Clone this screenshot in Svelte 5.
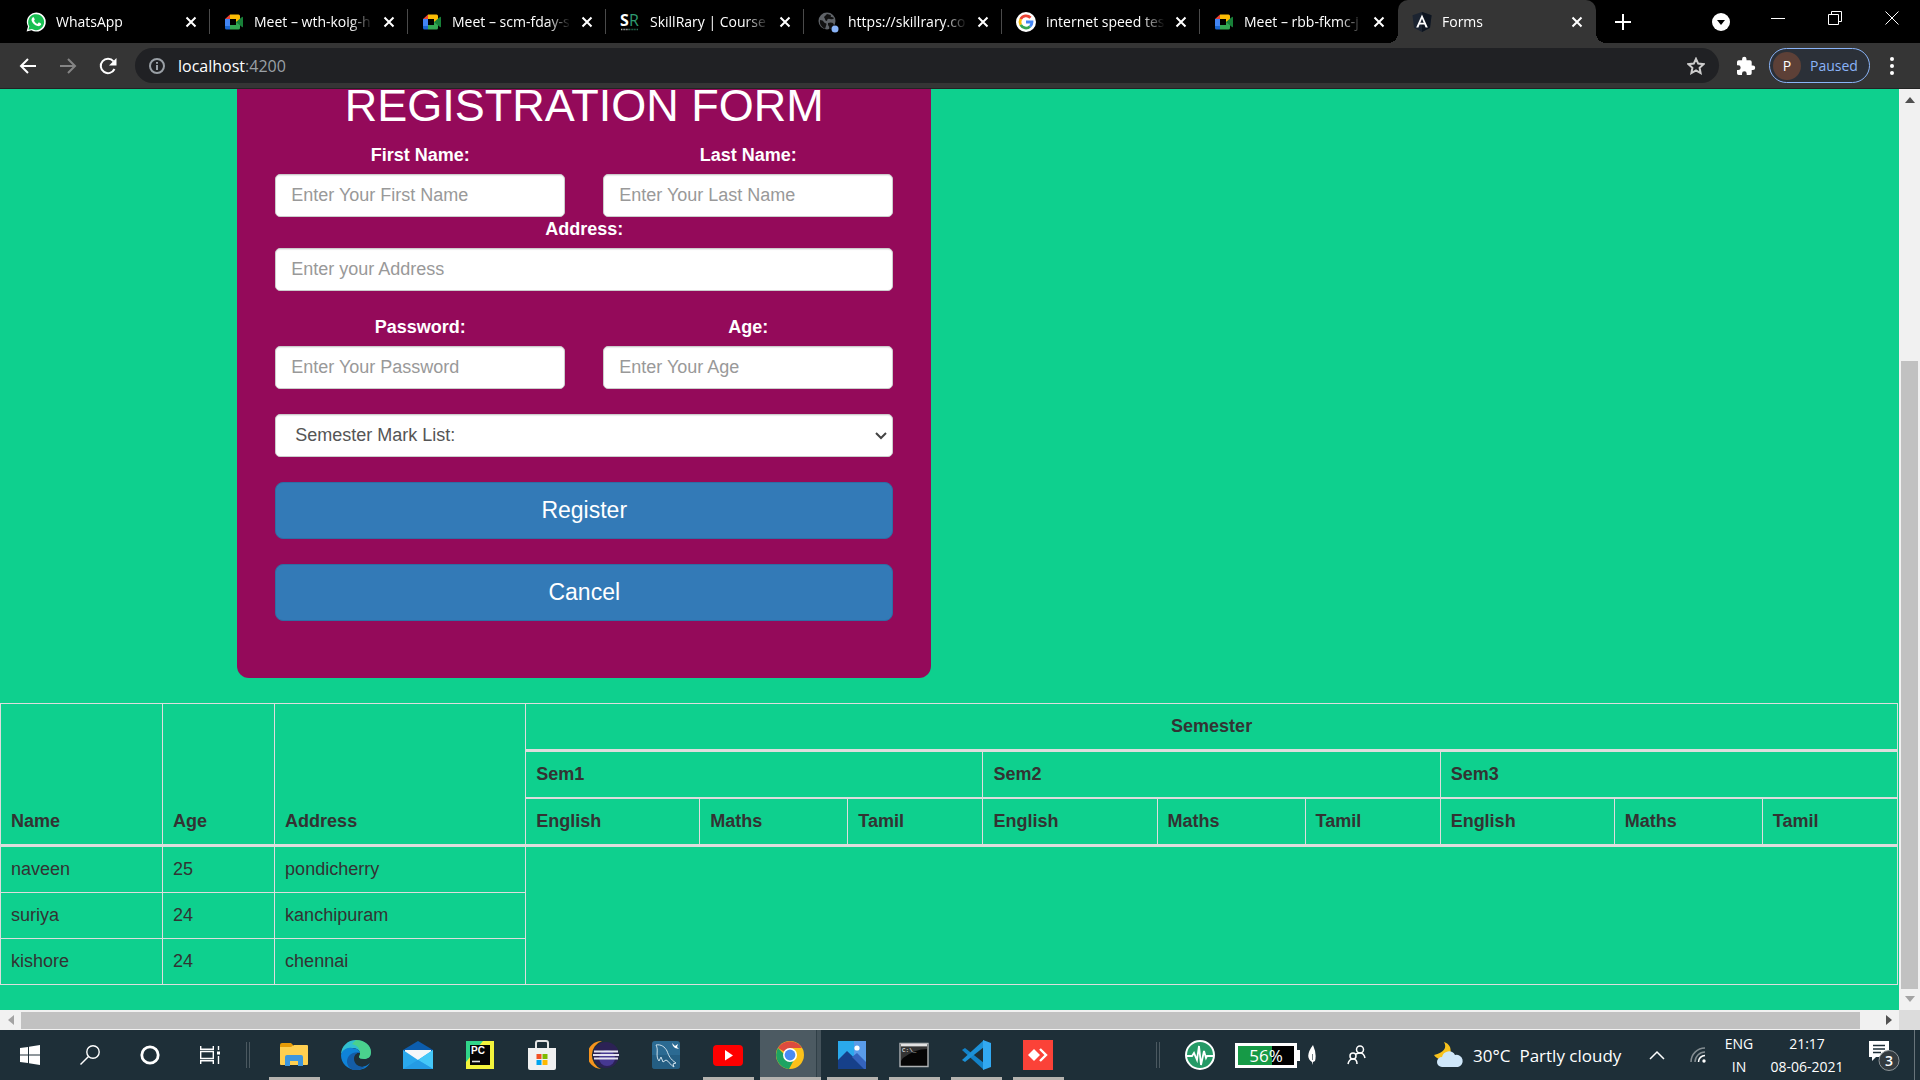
<script>
  const tabs = [
    { icon: 'whatsapp', title: 'WhatsApp' },
    { icon: 'meet', title: 'Meet – wth-koig-h' },
    { icon: 'meet', title: 'Meet – scm-fday-s' },
    { icon: 'skillrary', title: 'SkillRary | Course' },
    { icon: 'globe', title: 'https://skillrary.co' },
    { icon: 'google', title: 'internet speed tes' },
    { icon: 'meet', title: 'Meet – rbb-fkmc-j' },
    { icon: 'angular', title: 'Forms', active: true }
  ];

  const apps = [
    { name: 'File Explorer', icon: 'explorer', open: true },
    { name: 'Edge', icon: 'edge' },
    { name: 'Mail', icon: 'mail' },
    { name: 'PyCharm', icon: 'pycharm' },
    { name: 'Store', icon: 'store' },
    { name: 'Eclipse', icon: 'eclipse' },
    { name: 'MySQL Workbench', icon: 'mysql' },
    { name: 'YouTube', icon: 'youtube', open: true },
    { name: 'Chrome', icon: 'chrome', open: true, current: true },
    { name: 'Photos', icon: 'photos', open: true },
    { name: 'Command Prompt', icon: 'cmd', open: true },
    { name: 'Visual Studio Code', icon: 'vscode', open: true },
    { name: 'AnyDesk', icon: 'anydesk', open: true }
  ];

  const semesters = ['Sem1', 'Sem2', 'Sem3'];
  const subjects = ['English', 'Maths', 'Tamil'];
  const people = [
    { name: 'naveen', age: 25, address: 'pondicherry' },
    { name: 'suriya', age: 24, address: 'kanchipuram' },
    { name: 'kishore', age: 24, address: 'chennai' }
  ];
</script>

{#snippet favicon(kind)}
  <svg class="favicon" viewBox="0 0 20 20" aria-hidden="true">
    {#if kind === 'whatsapp'}
      <path d="M0.6 19.5 2 14.6A9.5 9.5 0 1 1 5.5 18.2Z" fill="#fff" />
      <path d="M2.4 17.8 3.3 14.3A8 8 0 1 1 6 17Z" fill="#17c052" />
      <path d="M6.6 5.6c.5-.5 1.200-.4 1.400.1l.7 1.600c.1.400-.1.700-.7 1.400.8 1.600 1.900 2.500 3.500 3.200l.9-1.100c.2-.3.5-.3.8-.2l1.700.9c.4.2.3 1.100 0 1.600-.7 1-2 1.300-3.200 1-3.200-.9-5.200-3-6-5.200-.4-1.200 0-2.500.9-3.300z" fill="#fff" />
    {:else if kind === 'meet'}
      <path d="M1 7 6 2.500V7z" fill="#ea4335" />
      <path d="M6 2.500h8.500q1.500 0 1.500 1.500v5l-4 2V7H6z" fill="#fbbc04" />
      <path d="M1 7h5v7H1z" fill="#4285f4" />
      <path d="M1 14h5v3.500H2.500Q1 17.500 1 16z" fill="#1967d2" />
      <path d="M6 13h6v-3l4-1v7q0 1.500-1.500 1.500H6z" fill="#34a853" />
      <path d="m12 10 6-5q1-.6 1 .5v9q0 1-1 .4z" fill="#188038" />
    {:else if kind === 'skillrary'}
      <text x="0" y="14" font-size="16" font-weight="700" fill="#fff" font-family="Open Sans, sans-serif">S</text>
      <text x="9" y="14" font-size="16" fill="#2e9b70" font-family="Open Sans, sans-serif">R</text>
      <path d="M1 17.500h8" stroke="#aaa" stroke-width="1.500" stroke-dasharray="1 .6" />
      <path d="M9 17.500h9" stroke="#286b51" stroke-width="1.500" stroke-dasharray="1 .6" />
    {:else if kind === 'globe'}
      <circle cx="9" cy="9" r="8.500" fill="#5f6368" />
      <path d="M2 8q3 0 4 2t2 1q1 1 0 3l-1 3q-6-3-5-9zM9 2l4 1q-1 2 1 2l2 1q-1 2-4 1t-3 2q-2 0-2-2l-1-2zM10 11q3-1 5 0l1 2q-2 4-5 4 1-2-1-4z" fill="#111" />
      <circle cx="17" cy="17" r="3.500" fill="#8ab4f8" />
    {:else if kind === 'google'}
      <circle cx="10" cy="10" r="10" fill="#fff" />
      <g fill="none" stroke-width="2.800">
        <path d="M14.500 5.800A6 6 0 0 0 4.700 7.200" stroke="#ea4335" />
        <path d="M4.700 7.200a6 6 0 0 0 0 5.600" stroke="#fbbc05" />
        <path d="M4.700 12.800a6 6 0 0 0 9.300 1.700" stroke="#34a853" />
        <path d="M14 14.500A6 6 0 0 0 16 10h-6" stroke="#4285f4" />
      </g>
    {:else}
      <path d="m10 0 9.500 3.200-1.500 12.500L10 20l-8-4.300L.5 3.200z" fill="#1c2431" />
      <path d="m10 0 9.500 3.200-1.500 12.500L10 20z" fill="#0e1520" />
      <path d="m10 2.500 5.800 13h-2.200l-1.200-2.900H7.600l-1.200 2.900H4.200zm0 4.200-1.700 4.100h3.400z" fill="#fff" />
    {/if}
  </svg>
{/snippet}

{#snippet appIcon(kind)}
  <svg class="app-icon" viewBox="0 0 30 30" aria-hidden="true">
    {#if kind === 'explorer'}
      <path d="M1 5q0-2 2-2h9l2 2v5H1z" fill="#e69b07" />
      <path d="M1 7h11l3-2h13q1 0 1 1v18q0 1-1 1H2q-1 0-1-1z" fill="#ffcf50" />
      <path d="M6 26V17q0-2 2-2h14q2 0 2 2v9h-5v-5h-8v5z" fill="#3d96dd" />
    {:else if kind === 'edge'}
      <path d="M0 15C0 6 7 0 15 0c9 0 15 6 15 12 0 5-3 7-7 7-3 0-5-1-5-2s1-1 1-4c0-3-4-5-8-5C6 8 1 11 0 15z" fill="#31bfd0" />
      <path d="M15 0c9 0 15 6 15 12 0 5-3 7-7 7-3 0-5-1-5-2s1-1 1-4q0-7-8-9 4-4 4-4z" fill="#5bdd60" opacity=".6" />
      <path d="M0 15c1-5 6-8 11-7 5 0 8 3 8 5-3-1-7 2-7 6 0 5 5 8 9 8 4-1 6-2 8-4-3 5-8 7-13 7C6 30 0 23 0 15z" fill="#0f83d8" />
      <path d="M12 30c-8-3-8-14 0-17 3-1 6-1 7 0-3-1-6 2-6 6 0 5 5 8 9 8l3-1c-3 3-8 5-13 4z" fill="#145da8" />
    {:else if kind === 'mail'}
      <path d="M0 10 15 1l15 9v3H0z" fill="#0c5dad" />
      <path d="M2 10h26v12H2z" fill="#f5f7f9" />
      <path d="m0 10 15 10 15-10v19H0z" fill="#2aa8ec" />
      <path d="m15 20 15-10v19z" fill="#45c8f8" />
      <path d="m15 20-15 9h30z" fill="#249be4" />
    {:else if kind === 'pycharm'}
      <path d="M1 1h28v28H1z" fill="#f4f43c" />
      <path d="M1 1h17L1 22z" fill="#31d58a" />
      <path d="M5 5h20v20H5z" fill="#050505" />
      <text x="6" y="14" font-size="10" font-weight="700" fill="#fff" font-family="Liberation Sans, sans-serif">PC</text>
      <path d="M7 21.500h8" stroke="#ddd" stroke-width="1.600" />
    {:else if kind === 'store'}
      <path d="M9 9V3q0-2 2-2h8q2 0 2 2v6" fill="none" stroke="#e5e5e5" stroke-width="2" />
      <path d="M1 8h28v20q0 2-2 2H3q-2 0-2-2z" fill="#f1f1f1" />
      <path d="M9.500 14h5v5h-5z" fill="#f25022" /><path d="M15.500 14h5v5h-5z" fill="#7fba00" />
      <path d="M9.500 20h5v5h-5z" fill="#00a4ef" /><path d="M15.500 20h5v5h-5z" fill="#ffb900" />
    {:else if kind === 'eclipse'}
      <path d="M13 1A14 14 0 0 0 12 29 15 15 0 0 1 13 1z" fill="#f7941e" />
      <circle cx="17" cy="15" r="13" fill="#2c2255" />
      <circle cx="18" cy="18" r="8" fill="#463891" />
      <path d="M5 11.500h24M4 15h26M5 18.500h24" stroke="#e4e2f0" stroke-width="1.800" />
    {:else if kind === 'mysql'}
      <rect x="1" y="1" width="28" height="28" rx="3" fill="#2b6a92" />
      <path d="M1 15h28v11q0 3-3 3H4q-3 0-3-3z" fill="#1f5679" opacity=".6" />
      <path d="M5 5c5-1 9 2 11 6 2 5 3 8 9 12l-3 1 1 3c-4-2-5-6-8-7l-3 2-2-5-2 4C4 16 8 10 5 5z" fill="none" stroke="#cfe1ec" stroke-width="1" />
      <path d="m21 3 3 3 3-2-1 3 2 2-4-1-2-2z" fill="#fff" />
    {:else if kind === 'youtube'}
      <rect y="5" width="30" height="21" rx="4" fill="#f00" />
      <path d="m12 10 8 5.500-8 5z" fill="#fff" />
    {:else if kind === 'chrome'}
      <circle cx="15" cy="15" r="14" fill="#fbc11a" />
      <path d="M15 15 3 8A14 14 0 0 1 27 8H15z" fill="#dd4b3e" />
      <path d="M3 8a14 14 0 0 0 11 21l6-11-5 2z" fill="#1ea362" />
      <circle cx="15" cy="15" r="7" fill="#fff" />
      <circle cx="15" cy="15" r="5.400" fill="#4a8af4" />
    {:else if kind === 'photos'}
      <path d="M1 1h28v28H1z" fill="#2aa9ec" />
      <path d="M17 1h12v28H17z" fill="#7b95e8" opacity=".6" />
      <path d="m1 20 9-9 19 18H1z" fill="#16408a" />
      <path d="m15 17 5-4 9 9v7h-2z" fill="#3463bc" />
      <circle cx="20" cy="8" r="2.600" fill="#fff" />
    {:else if kind === 'cmd'}
      <path d="M1 3.500h28v23H1z" fill="#050505" stroke="#aeb2b4" stroke-width="1.400" />
      <path d="M2 4h26v2.500H2z" fill="#e2e2e2" />
      <path d="M2 7h26v2Q16 9 4 18l-2 3z" fill="#333" />
      <text x="3" y="12" font-size="6" fill="#fff" font-family="Liberation Mono, monospace">C:\_</text>
    {:else if kind === 'vscode'}
      <path d="m1 10 3-2 19 15v7z" fill="#1382c8" />
      <path d="m1 20 3 2L23 7V0z" fill="#1c91d8" />
      <path d="m22 0 8 3v24l-8 3z" fill="#32a9f2" />
    {:else}
      <path d="M0 0h30v30H0z" fill="#fb4238" />
      <path d="m11 9 6 6-6 6-6-6z" fill="#fff" />
      <path d="m17 9 6 6-6 6" stroke="#fff" stroke-width="2.400" fill="none" />
    {/if}
  </svg>
{/snippet}

<div class="desktop">
  <header class="browser">
    <div class="tabstrip">
      {#each tabs as tab}
        <div class="tab" class:active={tab.active}>
          {@render favicon(tab.icon)}
          <span class="tab-title">{tab.title}</span>
          <button class="tab-close" aria-label="Close tab">
            <svg viewBox="0 0 12 12"><path d="m1.500 1.500 9 9m0-9-9 9" /></svg>
          </button>
        </div>
      {/each}
      <button class="new-tab" aria-label="New tab"><svg viewBox="0 0 16 16"><path d="M8 0v16M0 8h16" /></svg></button>
      <div class="window-controls">
        <button aria-label="Search tabs" class="tab-search">
          <svg viewBox="0 0 18 18"><circle cx="9" cy="9" r="9" fill="#fff" /><path d="M5 7h8l-4 5z" fill="#000" /></svg>
        </button>
        <button aria-label="Minimize"><svg viewBox="0 0 14 14"><path d="M0 7.500h14" /></svg></button>
        <button aria-label="Restore"><svg viewBox="0 0 14 14"><path d="M.5 3.500h10v10H.5zM3.500 3V.500h10v10H11" /></svg></button>
        <button aria-label="Close"><svg viewBox="0 0 14 14"><path d="m.5.500 13 13m0-13-13 13" /></svg></button>
      </div>
    </div>
    <div class="toolbar">
      <button class="nav" aria-label="Back"><svg viewBox="0 0 18 18"><path d="M17 9H2m7-7L2 9l7 7" stroke="#fff" /></svg></button>
      <button class="nav" aria-label="Forward"><svg viewBox="0 0 18 18"><path d="M1 9h15M9 2l7 7-7 7" stroke="#858585" /></svg></button>
      <button class="nav" aria-label="Reload"><svg viewBox="0 0 18 18"><path d="M15.500 12A7.200 7.200 0 1 1 14.500 4.300" stroke="#fff" /><path d="M17.500 1v7.500H10z" fill="#fff" /></svg></button>
      <div class="omnibox">
        <svg class="info" viewBox="0 0 16 16"><circle cx="8" cy="8" r="7" /><path d="M8 7v5M8 4v1.800" /></svg>
        <span class="url">localhost<span class="port">:4200</span></span>
        <button class="star" aria-label="Bookmark this tab"><svg viewBox="0 0 18 18"><path d="m9 1.800 2.200 4.800 5.300.6-3.900 3.600 1 5.200L9 13.400 4.400 16l1-5.200L1.500 7.200l5.300-.6z" /></svg></button>
      </div>
      <button class="ext" aria-label="Extensions">
        <svg viewBox="0 0 20 20"><path d="M17 9.500h-1.300V6q0-1.700-1.700-1.700h-3.500V3a2.200 2.200 0 0 0-4.400 0v1.300H2.700Q1 4.300 1 6v3.300h1.300a2.300 2.300 0 0 1 0 4.700H1v3.300Q1 19 2.700 19H6v-1.300a2.300 2.300 0 0 1 4.700 0V19H14q1.700 0 1.700-1.700v-3.400H17a2.200 2.200 0 0 0 0-4.400z" fill="#fff" /></svg>
      </button>
      <button class="profile"><span class="avatar">P</span>Paused</button>
      <button class="menu" aria-label="Menu"><svg viewBox="0 0 4 18"><circle cx="2" cy="2" r="2" /><circle cx="2" cy="9" r="2" /><circle cx="2" cy="16" r="2" /></svg></button>
    </div>
  </header>

  <div class="viewport">
    <main>
      <form class="card" onsubmit={(e) => e.preventDefault()}>
        <h1>REGISTRATION FORM</h1>
        <div class="pair">
          <div class="field"><label for="first">First Name:</label><input id="first" type="text" placeholder="Enter Your First Name" /></div>
          <div class="field"><label for="last">Last Name:</label><input id="last" type="text" placeholder="Enter Your Last Name" /></div>
        </div>
        <div class="field wide"><label for="address">Address:</label><input id="address" type="text" placeholder="Enter your Address" /></div>
        <div class="pair spaced">
          <div class="field"><label for="password">Password:</label><input id="password" type="password" placeholder="Enter Your Password" /></div>
          <div class="field"><label for="age">Age:</label><input id="age" type="text" placeholder="Enter Your Age" /></div>
        </div>
        <div class="select spaced">
          <select aria-label="Semester Mark List"><option>Semester Mark List:</option></select>
          <svg viewBox="0 0 12 8" aria-hidden="true"><path d="m1 1 5 5 5-5" /></svg>
        </div>
        <button class="submit spaced" type="submit">Register</button>
        <button class="submit" type="button">Cancel</button>
      </form>

      <table>
        <colgroup>
          <col class="c-name" /><col class="c-age" /><col class="c-address" />
          {#each semesters as _}<col class="c-english" /><col class="c-maths" /><col class="c-tamil" />{/each}
        </colgroup>
        <thead>
          <tr>
            <th rowspan="3">Name</th><th rowspan="3">Age</th><th rowspan="3">Address</th>
            <th colspan="9" class="center">Semester</th>
          </tr>
          <tr class="sems">{#each semesters as sem}<th colspan="3">{sem}</th>{/each}</tr>
          <tr>{#each semesters as _}{#each subjects as subject}<th>{subject}</th>{/each}{/each}</tr>
        </thead>
        <tbody>
          {#each people as p}
            <tr><td>{p.name}</td><td>{p.age}</td><td>{p.address}</td></tr>
          {/each}
        </tbody>
      </table>
    </main>
    <div class="vscroll">
      <svg viewBox="0 0 10 6"><path d="M0 6 5 0l5 6z" fill="#505050" /></svg>
      <div class="vtrack"><div class="vthumb"></div></div>
      <svg viewBox="0 0 10 6"><path d="m0 0 5 6 5-6z" fill="#a3a3a3" /></svg>
    </div>
  </div>
  <div class="hscroll">
    <svg viewBox="0 0 6 10"><path d="M6 0 0 5l6 5z" fill="#a3a3a3" /></svg>
    <div class="hthumb"></div>
    <svg class="right" viewBox="0 0 6 10"><path d="m0 0 6 5-6 5z" fill="#505050" /></svg>
    <div class="corner"></div>
  </div>

  <footer class="taskbar">
    <button class="sys" aria-label="Start"><svg viewBox="0 0 20 20"><path d="m0 3 8-1v7.500H0zM9 1.800 20 0v9.500H9zM0 10.500h8V18l-8-1zM9 10.500h11V20L9 18.300z" fill="#fff" /></svg></button>
    <button class="sys" aria-label="Search"><svg viewBox="0 0 20 20"><circle cx="13" cy="7" r="6.200" /><path d="M8.500 11.500 0.500 19.500" /></svg></button>
    <button class="sys" aria-label="Cortana"><svg viewBox="0 0 20 20"><circle cx="10" cy="10" r="8.200" stroke-width="2.800" /></svg></button>
    <button class="sys" aria-label="Task View"><svg viewBox="0 0 20 20"><path d="M.7 1v3.300h12.600V1M.7 19v-3.300h12.600V19M.7 6.500h12.600v7H.7zM18.500 1v4M18.500 11v8" /><path d="M17 6.500h3v3h-3z" fill="#fff" stroke="none" /></svg></button>
    <span class="divider left"></span>
    {#each apps as app}
      <button class="app" class:open={app.open} class:current={app.current} aria-label={app.name}>{@render appIcon(app.icon)}</button>
    {/each}

    <div class="tray">
      <span class="divider"></span>
      <span class="wave"><svg viewBox="0 0 30 30"><circle cx="15" cy="15" r="14" fill="#249a66" stroke="#fff" stroke-width="2" /><path d="M2 16h5l2-3 3 7 2-14 2 19 3-14 2 7 1-2h6" fill="none" stroke="#fff" stroke-width="1.800" /></svg></span>
      <span class="battery">56%</span>
      <span class="leaf"><svg viewBox="0 0 8 20"><path d="M5 0q4 9 2 16l-2 1v3l-1-3Q-4 12 5 0z" fill="#fff" /><path d="M4.500 9v6" stroke="#1e2f38" stroke-width=".6" /></svg></span>
      <span class="contacts"><svg viewBox="0 0 20 20"><circle cx="13" cy="4.500" r="3.500" /><circle cx="6" cy="11" r="3" /><path d="M1 19q1-5 5-5t4 5M9 9q2-1 4-1 4 0 5 5" /></svg></span>
      <span class="weather">
        <svg viewBox="0 0 30 26"><path d="M10 0q5 9-10 13 3 5 9 4 10-3 7-12-2-4-6-5z" fill="#f8c21c" /><path d="M8 25a5 5 0 0 1 0-10 7 7 0 0 1 13-2 6 6 0 0 1 3 12z" fill="#cfe7fa" /></svg>
        <span>30°C</span><span>Partly cloudy</span>
      </span>
      <button class="chevron" aria-label="Show hidden icons"><svg viewBox="0 0 16 10"><path d="m1 9 7-7 7 7" /></svg></button>
      <span class="wifi"><svg viewBox="0 0 16 16"><path d="M1 15A14 14 0 0 1 15 1M5 15A10 10 0 0 1 15 5" opacity=".45" /><path d="M8.500 15A6.500 6.500 0 0 1 15 8.500" /><circle cx="14" cy="14" r="1.700" fill="#fff" stroke="none" /></svg></span>
      <span class="lang"><span>ENG</span><span>IN</span></span>
      <span class="clock"><span>21:17</span><span>08-06-2021</span></span>
      <button class="notices" aria-label="Notifications">
        <svg viewBox="0 0 32 32"><path d="M1 2h20v16H8l-4 4v-4H1z" fill="#fff" /><path d="M5 6.500h12M5 10h12M5 13.500h8" stroke="#1e2f38" stroke-width="1.500" /><circle cx="21" cy="21.500" r="10" fill="#333b40" stroke="#8d9498" /><text x="21" y="27" font-size="14" font-weight="600" text-anchor="middle" fill="#fff" font-family="Open Sans, sans-serif">3</text></svg>
      </button>
      <span class="show-desktop"></span>
    </div>
  </footer>
</div>

<style>
  :global(body) { margin: 0; }
  * { box-sizing: border-box; }
  button { border: 0; background: none; padding: 0; margin: 0; font: inherit; color: inherit; display: flex; align-items: center; justify-content: center; }
  svg { display: block; flex: none; }

  .desktop { height: 100vh; display: flex; flex-direction: column; overflow: hidden; font-family: "Open Sans", "Noto Sans", sans-serif; }

  .browser { flex: none; background: #353535; color: #fff; }
  .tabstrip { display: flex; height: 43px; background: #000; padding-left: 12px; }
  .tab { flex: 0 1 198px; min-width: 0; display: flex; align-items: center; gap: 10px; padding: 0 13px 0 14px; position: relative; font-size: 14px; line-height: 20px; }
  .tab:not(.active)::after { content: ""; position: absolute; right: 0; top: 9px; height: 25px; width: 1px; background: #4a4a4a; }
  .tab:nth-child(7)::after { display: none; }
  .tab.active { background: #353535; border-radius: 10px 10px 0 0; }
  .tab.active::before, .tab.active::after { content: ""; position: absolute; bottom: 0; width: 10px; height: 10px; }
  .tab.active::before { left: -10px; background: radial-gradient(circle at 0 0, #000 10px, #353535 10px); }
  .tab.active::after { right: -10px; background: radial-gradient(circle at 100% 0, #000 10px, #353535 10px); }
  .favicon { width: 20px; height: 20px; overflow: visible; }
  .tab-title { flex: 1; min-width: 0; overflow: hidden; white-space: nowrap; mask-image: linear-gradient(to right, #000 80%, transparent); }
  .tab-close svg { width: 12px; height: 12px; stroke: #fff; stroke-width: 2; }
  .new-tab { width: 54px; }
  .new-tab svg { width: 16px; height: 16px; stroke: #fff; stroke-width: 2; }
  .window-controls { margin-left: auto; display: flex; height: 36px; }
  .window-controls button { width: 57px; }
  .window-controls svg { width: 14px; height: 14px; stroke: #fff; fill: none; }
  .window-controls .tab-search { height: 43px; }
  .window-controls .tab-search svg { width: 18px; height: 18px; stroke: none; }

  .toolbar { height: 46px; display: flex; align-items: center; padding: 0 8px; border-bottom: 1px solid #232323; }
  .nav { width: 40px; }
  .nav svg { width: 18px; height: 18px; fill: none; stroke-width: 2; }
  .omnibox { flex: 1; height: 35px; margin-left: 7px; border-radius: 18px; background: #202124; display: flex; align-items: center; padding: 0 14px; gap: 13px; font-size: 16px; }
  .info { width: 16px; height: 16px; fill: none; stroke: #9aa0a6; stroke-width: 2; }
  .url { flex: 1; }
  .port { color: #9aa0a6; }
  .star svg { width: 18px; height: 18px; fill: none; stroke: #ccc; stroke-width: 2; }
  .ext { width: 50px; padding-left: 4px; }
  .ext svg { width: 20px; height: 20px; }
  .profile { width: 101px; height: 35px; border: 1px solid #8ab4f8; border-radius: 18px; background: #2b3038; color: #8ab4f8; font-size: 14px; gap: 9px; justify-content: flex-start; padding-left: 3px; }
  .avatar { width: 28px; height: 28px; border-radius: 50%; background: #5d4037; color: #fff; line-height: 28px; }
  .menu { width: 42px; padding-left: 2px; }
  .menu svg { width: 4px; height: 18px; fill: #fff; }

  .viewport { flex: 1; min-height: 0; display: flex; background: #0ed08e; }
  main { flex: 1; min-width: 0; overflow: hidden; padding-right: 1px; font-family: "Liberation Sans", Arial, sans-serif; font-size: 18px; line-height: 25px; color: #333; }
  .card { margin: 0 0 25px 12.5%; max-width: 694px; padding: 0 38px 57px; background: #940a5a; border-radius: 0 0 12px 12px; color: #fff; }
  h1 { margin: 0 0 21px; font-size: 45px; line-height: 33px; font-weight: 400; text-align: center; }
  .pair { display: grid; grid-template-columns: 1fr 1fr; gap: 38px; }
  .field { display: flex; flex-direction: column; gap: 6px; }
  .field label { text-align: center; font-weight: 700; }
  .wide { margin-bottom: 24px; }
  .spaced { margin-bottom: 25px; }
  input, select { width: 100%; height: 43px; padding: 0 15px; border: 1px solid #ccc; border-radius: 5px; background: #fff; font: inherit; color: #555; box-shadow: inset 0 1px 1px rgba(0, 0, 0, .08); }
  input::placeholder { color: #999; opacity: 1; }
  .select { position: relative; }
  select { display: block; appearance: none; padding: 0 19px; }
  .select svg { position: absolute; right: 6px; top: 18px; width: 12px; height: 8px; fill: none; stroke: #444; stroke-width: 2; pointer-events: none; }
  .submit { width: 100%; height: 57px; border: 1px solid #2e6da4; border-radius: 8px; background: #337ab7; font-size: 23px; color: #fff; }

  table { width: 100%; table-layout: fixed; border-collapse: collapse; border: 1px solid #ddd; }
  .c-name { width: 162px; } .c-age { width: 112px; } .c-address { width: 251px; }
  .c-english { width: 174px; } .c-maths { width: 148px; } .c-tamil { width: 135px; }
  th, td { border: 1px solid #ddd; padding: 10px; text-align: left; vertical-align: top; }
  th { vertical-align: bottom; border-bottom-width: 3px; }
  .sems th { border-bottom-width: 2px; }
  .center { text-align: center; }

  .vscroll { width: 21px; background: #f1f1f1; display: flex; flex-direction: column; align-items: center; padding: 8px 2px; gap: 7px; }
  .vscroll svg { width: 10px; height: 6px; }
  .vtrack { flex: 1; width: 100%; display: flex; flex-direction: column; }
  .vtrack::before { content: ""; flex: 2; }
  .vthumb { flex: 5; background: #c1c1c1; }
  .hscroll { flex: none; height: 20px; background: #f1f1f1; display: flex; align-items: center; }
  .hscroll svg { width: 6px; height: 10px; margin: 0 7px 0 8px; }
  .hthumb { flex: 1; height: 17px; background: #c1c1c1; }
  .hscroll .right { margin: 0 7px 0 26px; }
  .corner { width: 21px; height: 20px; background: #dcdcdc; }

  .taskbar { flex: none; height: 50px; display: flex; background: #1e2f38; color: #fff; }
  .sys { width: 60px; }
  .sys svg { width: 20px; height: 20px; fill: none; stroke: #fff; stroke-width: 1.400; }
  .sys:first-child svg { stroke: none; }
  .divider { width: 4px; height: 26px; align-self: center; border: solid #4b5960; border-width: 0 1px; }
  .divider.left { margin: 0 13px 0 6px; }
  .app { width: 62px; position: relative; }
  .app-icon { width: 30px; height: 30px; }
  .app.open::after { content: ""; position: absolute; left: 6px; right: 5px; bottom: 0; height: 3px; background: #b5b3af; }
  .app.current { background: linear-gradient(to right, transparent 1px, #4c5a62 1px 57px, #303f47 57px 58px, #44525a 58px); }
  .app.current::after { left: 1px; right: 0; }
  .tray { margin-left: auto; display: flex; align-items: center; font-size: 17px; white-space: nowrap; }
  .wave { padding: 0 20px 0 25px; }
  .wave svg { width: 30px; height: 30px; }
  .battery { width: 62px; height: 25px; border: 3px solid #fff; background: linear-gradient(to right, #169a46 60%, #000 60%); text-align: center; line-height: 19px; position: relative; }
  .battery::after { content: ""; position: absolute; right: -6px; top: 4px; width: 3px; height: 11px; background: #fff; }
  .leaf { margin-left: 11px; }
  .leaf svg { width: 8px; height: 20px; }
  .contacts { margin: 0 67px 0 31px; }
  .contacts svg { width: 20px; height: 20px; fill: none; stroke: #fff; stroke-width: 1.500; }
  .weather { display: flex; align-items: center; gap: 9px; width: 212px; }
  .weather svg { width: 30px; height: 26px; }
  .chevron { width: 22px; }
  .chevron svg, .wifi svg { width: 16px; height: 16px; fill: none; stroke: #fff; stroke-width: 1.500; }
  .wifi { margin-left: 22px; }
  .lang, .clock { display: flex; flex-direction: column; align-items: center; font-size: 14px; line-height: 23px; }
  .lang { width: 66px; }
  .clock { width: 70px; }
  .notices { width: 72px; padding-left: 12px; }
  .notices svg { width: 32px; height: 32px; }
  .show-desktop { width: 6px; height: 50px; border-left: 1px solid #68747a; }
</style>
